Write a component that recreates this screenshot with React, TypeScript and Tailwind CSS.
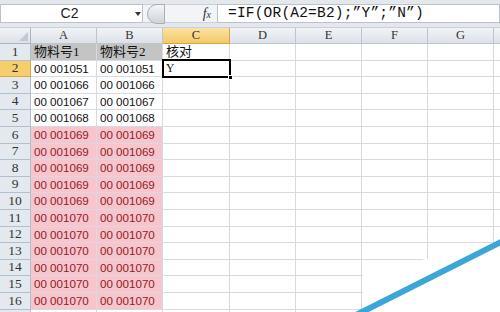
import React from 'react';

const cols = ['A', 'B', 'C', 'D', 'E', 'F', 'G'];
const widths = ['w-[66px]', 'w-[66px]', 'w-[67px]', 'w-[66px]', 'w-[66px]', 'w-[66px]', 'w-[66px]'];

const rows: [string, string, string][] = [
  ['物料号1', '物料号2', '核对'],
  ['00 001051', '00 001051', 'Y'],
  ['00 001066', '00 001066', ''],
  ['00 001067', '00 001067', ''],
  ['00 001068', '00 001068', ''],
  ['00 001069', '00 001069', ''],
  ['00 001069', '00 001069', ''],
  ['00 001069', '00 001069', ''],
  ['00 001069', '00 001069', ''],
  ['00 001069', '00 001069', ''],
  ['00 001070', '00 001070', ''],
  ['00 001070', '00 001070', ''],
  ['00 001070', '00 001070', ''],
  ['00 001070', '00 001070', ''],
  ['00 001070', '00 001070', ''],
  ['00 001070', '00 001070', ''],
  ['', '', ''],
];

const serif = "font-['Liberation_Serif','Noto_Sans_CJK_SC',serif]";
const sans = "font-['Liberation_Sans','Noto_Sans_CJK_SC',sans-serif]";

export default function App() {
  return (
    <div className="relative w-[500px] h-[312px] overflow-hidden bg-white">
      {/* formula bar */}
      <div className="flex h-[28px] bg-[#e4e8ed] pt-[4px] pb-[4px] border-b border-[#c9d0d9]">
        <div className="relative flex w-[143px] items-center justify-center bg-white border border-[#b9c2cd]">
          <span className={`${sans} text-[14px] text-[#222] pr-[4px]`}>C2</span>
          <span className="absolute right-[1px] top-[7px] w-0 h-0 border-l-[3.5px] border-r-[3.5px] border-t-[4px] border-l-transparent border-r-transparent border-t-[#333]" />
        </div>
        <div className="flex w-[74px] items-center pl-[4px] bg-[#f2f4f7] border-y border-[#c9d0d9]">
          <div className="w-[18px] h-[20px] rounded-l-full bg-gradient-to-b from-[#f4f5f7] to-[#cfd4da] border border-[#a7aeb7]" />
          <span className="ml-auto mr-[6px] font-['Liberation_Serif',serif] italic text-[14px] text-[#333]">
            f<span className="text-[10px]">x</span>
          </span>
        </div>
        <div className="flex flex-1 items-center bg-white border border-[#b9c2cd] pl-[10px]">
          <span className="font-['Liberation_Mono',monospace] text-[14.5px] text-[#111] tracking-[0.2px]">
            =IF(OR(A2=B2);”Y”;”N”)
          </span>
        </div>
      </div>

      {/* column headers */}
      <div className="flex h-[16px]">
        <div className="relative w-[31px] shrink-0 bg-gradient-to-b from-[#f1f3f6] to-[#dde2e8] border-r border-b border-[#a9b5c3]">
          <span className="absolute right-[2px] bottom-[2px] w-0 h-0 border-l-[9px] border-t-[9px] border-l-transparent border-t-transparent border-r-0 border-b-[9px] border-b-[#c2c9d1]" />
        </div>
        {cols.map((c, i) => (
          <div
            key={c}
            className={`${widths[i]} shrink-0 flex items-center justify-center border-r border-b ${serif} text-[12.5px] ${
              c === 'C'
                ? 'bg-gradient-to-b from-[#fbe3a4] to-[#f3c865] border-[#d8a93c] text-[#333]'
                : 'bg-gradient-to-b from-[#f1f3f6] to-[#dde2e8] border-[#bcc6d1] text-[#333]'
            }`}
          >
            {c}
          </div>
        ))}
        <div className="flex-1 bg-gradient-to-b from-[#f1f3f6] to-[#dde2e8] border-b border-[#bcc6d1]" />
      </div>

      {/* grid */}
      <div className="flex flex-col">
        {rows.map((r, idx) => {
          const n = idx + 1;
          const pink = n >= 6 && n <= 16;
          return (
            <div key={n} className="flex h-[16.6px] shrink-0">
              <div
                className={`w-[31px] shrink-0 flex items-center justify-center border-r border-b ${serif} text-[13.5px] text-[#333] ${
                  n === 2 ? 'bg-[#f6ce6e] border-[#d8a93c]' : 'bg-[#e4e9ef] border-[#b3bfcc]'
                }`}
              >
                {n <= 16 ? n : ''}
              </div>
              {cols.map((c, i) => {
                const val = i < 3 ? r[i] : '';
                let bg = 'bg-white';
                if (n === 1 && i < 2) bg = 'bg-[#c4c4c4]';
                if (pink && i < 2) bg = 'bg-[#f8c5cc]';
                const red = pink && i < 2;
                const isName = n === 1;
                return (
                  <div
                    key={c}
                    className={`${widths[i]} shrink-0 flex items-center pl-[3px] border-r border-b border-[#d6dbe1] whitespace-nowrap overflow-hidden ${bg} ${
                      isName || (n === 2 && i === 2) ? serif : sans
                    } ${isName ? 'text-[13px]' : 'text-[11.6px]'} ${red ? 'text-[#8e1c2a]' : 'text-[#111]'}`}
                  >
                    {val}
                  </div>
                );
              })}
              <div className="flex-1 bg-white border-b border-[#d6dbe1]" />
            </div>
          );
        })}
      </div>

      {/* active cell C2 */}
      <div className="absolute left-[162px] top-[59px] w-[69px] h-[18.6px] border-2 border-black pointer-events-none" />
      <div className="absolute left-[228px] top-[75px] w-[5px] h-[5px] bg-black border border-white" />

      {/* watermark peel */}
      <svg className="absolute left-0 top-0" width="500" height="312" viewBox="0 0 500 312">
        <polygon points="363,312 363,274 430,258 500,241 500,312" fill="#ffffff" />
        <line x1="356" y1="315" x2="503" y2="241" stroke="#3ba7d9" strokeWidth="6" />
      </svg>
    </div>
  );
}
